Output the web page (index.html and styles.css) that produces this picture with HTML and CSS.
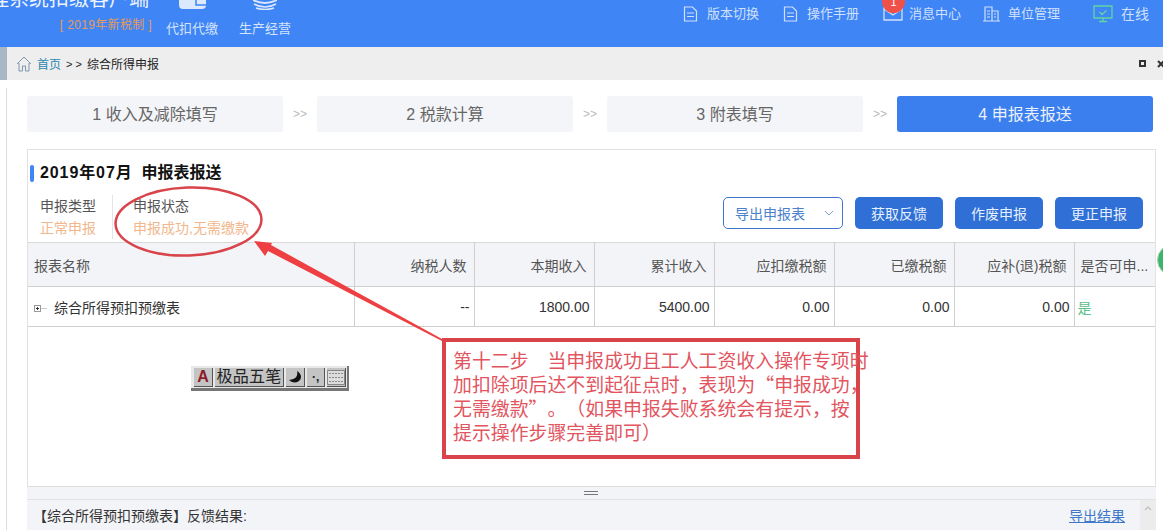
FILE: index.html
```html
<!DOCTYPE html>
<html lang="zh-CN">
<head>
    <meta charset="UTF-8">
    <meta name="viewport" content="width=device-width, initial-scale=1.0">
    <title>综合所得申报</title>
    <link rel="stylesheet" href="styles.css">
</head>
<body>
    <header class="header">
        <div class="brand">
            <div class="brand-title">自然人税收管理系统扣缴客户端</div>
            <div class="brand-sub">[ 2019年新税制 ]</div>
        </div>
        <nav class="main-nav">
            <div class="main-nav-item">
                <svg class="main-nav-icon" width="27" height="10" viewBox="0 0 27 10"><path d="M0 0h27v5q0 4-4 4H4q-4 0-4-4z" fill="#dce8fc"/><path d="M17 0v5h10" fill="none" stroke="#3f85f5" stroke-width="1.5"/></svg>
                <span>代扣代缴</span>
            </div>
            <div class="main-nav-item">
                <svg class="main-nav-icon" width="24" height="10" viewBox="0 0 24 10"><path d="M0 0q12 6 24 0" fill="none" stroke="#dce8fc" stroke-width="2"/><path d="M1 4q11 6 22 0M3 8q9 3 18 0" fill="none" stroke="#dce8fc" stroke-width="1.6"/></svg>
                <span>生产经营</span>
            </div>
        </nav>
        <nav class="top-nav">
            <a class="top-link link-version">
                <svg width="15" height="16" viewBox="0 0 15 16"><path d="M1.500 1h8l4 4v10h-12zM4 7h7M4 10.500h7" fill="none" stroke="#cfe0fb" stroke-width="1.200"/></svg>
                <span>版本切换</span>
            </a>
            <a class="top-link link-manual">
                <svg width="15" height="16" viewBox="0 0 15 16"><path d="M1.500 1h8l4 4v10h-12zM4 7h7M4 10.500h7" fill="none" stroke="#cfe0fb" stroke-width="1.200"/></svg>
                <span>操作手册</span>
            </a>
            <a class="top-link link-msg">
                <svg width="20" height="14" viewBox="0 0 20 14"><path d="M1 1h18v12H1zM1 2l9 6 9-6" fill="none" stroke="#cfe0fb" stroke-width="1.300"/></svg>
                <i class="badge">1</i>
                <span>消息中心</span>
            </a>
            <a class="top-link link-unit">
                <svg width="17" height="16" viewBox="0 0 17 16"><path d="M2 15V1h7v14M9 5h6v10M0 15h17M4 5h3M4 8h3M4 11h3M11 8h2M11 11h2" fill="none" stroke="#cfe0fb" stroke-width="1.200"/></svg>
                <span>单位管理</span>
            </a>
            <a class="top-link link-online">
                <svg width="20" height="18" viewBox="0 0 20 18"><path d="M1 1h18v12H1zM6 16.500h8M10 13v3M6.500 7l2.500 2.500 4.500-4" fill="none" stroke="#5fd6a0" stroke-width="1.300"/></svg>
                <span>在线</span>
            </a>
        </nav>
    </header>

    <div class="crumbs">
        <svg class="home-icon" width="16" height="16" viewBox="0 0 16 16"><path d="M1 8l7-7 7 7M3 7v8h3.500v-5h3v5H13V7" fill="none" stroke="#7d97ad" stroke-width="1"/></svg>
        <a class="crumb-home">首页</a>
        <span class="crumb-sep">&gt; &gt;</span>
        <span class="crumb-current">综合所得申报</span>
        <div class="crumb-tools">
            <span class="tool-max"></span>
            <svg width="8" height="8" viewBox="0 0 8 8"><path d="M1 1l6 6M7 1L1 7" stroke="#333" stroke-width="2"/></svg>
        </div>
    </div>

    <main class="main">
        <div class="page">
            <div class="steps">
                <div class="step">1 收入及减除填写</div>
                <div class="step-sep">&gt;&gt;</div>
                <div class="step">2 税款计算</div>
                <div class="step-sep">&gt;&gt;</div>
                <div class="step">3 附表填写</div>
                <div class="step-sep">&gt;&gt;</div>
                <div class="step step-active">4 申报表报送</div>
            </div>

            <section class="panel">
                <h2 class="panel-title"><span class="panel-date">2019年07月</span>&nbsp; 申报表报送</h2>
                <div class="info-row">
                    <div class="info-item info-type">
                        <div class="info-label">申报类型</div>
                        <div class="info-value">正常申报</div>
                    </div>
                    <div class="info-item info-status">
                        <div class="info-label">申报状态</div>
                        <div class="info-value">申报成功,无需缴款</div>
                    </div>
                    <div class="actions">
                        <button class="btn-export">导出申报表
                            <svg width="10" height="6" viewBox="0 0 10 6"><path d="M1 1l4 4 4-4" fill="none" stroke="#7f9fcc" stroke-width="1"/></svg>
                        </button>
                        <button class="btn">获取反馈</button>
                        <button class="btn">作废申报</button>
                        <button class="btn">更正申报</button>
                    </div>
                </div>

                <table class="report-table">
                    <thead>
                        <tr>
                            <th class="col-name">报表名称</th>
                            <th class="col-num">纳税人数</th>
                            <th class="col-num">本期收入</th>
                            <th class="col-num">累计收入</th>
                            <th class="col-num">应扣缴税额</th>
                            <th class="col-num">已缴税额</th>
                            <th class="col-num">应补(退)税额</th>
                            <th class="col-flag">是否可申...</th>
                        </tr>
                    </thead>
                    <tbody>
                        <tr>
                            <td class="col-name"><span class="tree-toggle"></span><span class="tree-line"></span>综合所得预扣预缴表</td>
                            <td class="col-num">--</td>
                            <td class="col-num">1800.00</td>
                            <td class="col-num">5400.00</td>
                            <td class="col-num">0.00</td>
                            <td class="col-num">0.00</td>
                            <td class="col-num">0.00</td>
                            <td class="col-flag flag-yes">是</td>
                        </tr>
                    </tbody>
                </table>
            </section>

            <div class="splitter"><span class="splitter-grip"></span></div>

            <div class="feedback">
                <span class="feedback-text">【综合所得预扣预缴表】反馈结果:</span>
                <a class="feedback-link">导出结果</a>
                <div class="scroll-bar">
                    <svg width="8" height="6" viewBox="0 0 8 6"><path d="M1 5l3-3 3 3" fill="none" stroke="#c4c4c4" stroke-width="1.500"/></svg>
                </div>
            </div>
        </div>
    </main>

    <!-- 悬浮在页面上的输入法状态条 -->
    <div class="ime-bar">
        <span class="ime-cell ime-a">A</span>
        <span class="ime-cell ime-name">极品五笔</span>
        <span class="ime-cell ime-moon">
            <svg width="14" height="14" viewBox="0 0 14 14"><path d="M9 1q2 8-8 9 6 5 11 0 3-5-3-9z" fill="#111"/></svg>
        </span>
        <span class="ime-cell ime-dots">·,</span>
        <span class="ime-cell ime-keys">
            <svg width="18" height="15" viewBox="0 0 18 15"><path d="M.5.500h17v14H.500z" fill="#ddd" stroke="#888"/><path d="M2 3.500h14M2 7.500h14M2 11.500h14" stroke="#888" stroke-dasharray="2 1"/></svg>
        </span>
    </div>

    <div class="side-ball"></div>

    <!-- 截图上的红色标注 -->
    <svg class="mark-layer" width="1163" height="530" viewBox="0 0 1163 530">
        <ellipse cx="188.500" cy="221.500" rx="73" ry="34" fill="none" stroke="#d9434a" stroke-width="2.500" transform="rotate(-2 188.500 221.500)"/>
        <path d="M254 241L272 243L271 245L442 339L442 341L268 251L265 256Z" fill="#ee3f42"/>
    </svg>
    <div class="callout">第十二步　当申报成功且工人工资收入操作专项时<br>加扣除项后达不到起征点时，表现为“申报成功，<br>无需缴款”。（如果申报失败系统会有提示，按<br>提示操作步骤完善即可）</div>
</body>
</html>
```

FILE: styles.css
```css
* {
    box-sizing: border-box;
}
html, body {
    margin: 0;
    height: 530px;
    overflow: hidden;
}
body {
    position: relative;
    display: flex;
    flex-direction: column;
    background-color: #fff;
    font-family: "Liberation Sans", "Noto Sans CJK SC", sans-serif;
    font-size: 14px;
    color: #333;
}

/* 顶部蓝条 */
.header {
    flex: none;
    height: 47px;
    display: flex;
    background-color: #3f85f5;
    color: #d5e4fc;
    overflow: hidden;
}
.brand {
    flex: none;
    width: 152px;
    display: flex;
    flex-direction: column;
    align-items: flex-end;
}
.brand-title {
    display: flex;
    justify-content: flex-end;
    width: 149px;
    margin-right: 3px;
    margin-top: -16px;
    height: 30px;
    line-height: 30px;
    font-size: 20px;
    color: #eef4fe;
    white-space: nowrap;
}
.brand-sub {
    margin-top: 2px;
    font-size: 12px;
    letter-spacing: .35px;
    line-height: 18px;
    color: #e69b5a;
    white-space: nowrap;
}
.main-nav {
    display: flex;
    gap: 21px;
    margin-left: 14px;
}
.main-nav-item {
    display: flex;
    flex-direction: column;
    align-items: center;
    font-size: 13px;
    line-height: 18px;
}
.main-nav-icon {
    display: block;
    margin-bottom: 10px;
}
.top-nav {
    display: flex;
    height: 28px;
    margin-left: auto;
    margin-right: 14px;
    align-items: center;
}
.top-link {
    position: relative;
    display: flex;
    align-items: center;
    font-size: 13px;
    line-height: 18px;
    color: #cfe0fb;
    white-space: nowrap;
}
.top-link svg {
    display: block;
}
.link-version span, .link-manual span {
    margin-left: 9px;
}
.link-manual {
    margin-left: 24px;
}
.link-msg {
    margin-left: 24px;
}
.link-msg span {
    margin-left: 6px;
}
.link-unit {
    margin-left: 22px;
}
.link-unit span {
    margin-left: 8px;
}
.link-online {
    margin-left: 33px;
}
.link-online span {
    margin-left: 8px;
    font-size: 14px;
}
.badge {
    position: absolute;
    left: -1px;
    top: -15px;
    width: 23px;
    height: 23px;
    border-radius: 50%;
    background-color: #f0504a;
    color: #fff;
    font-style: normal;
    font-size: 11px;
    line-height: 24px;
    text-align: center;
}

/* 面包屑 */
.crumbs {
    flex: none;
    height: 33px;
    display: flex;
    align-items: center;
    background-color: #eee;
    border-left: 7px solid #a9b6c4;
    padding-left: 9px;
    font-size: 12px;
}
.home-icon {
    flex: none;
    margin-right: 5px;
}
.crumb-home {
    color: #2a88ad;
}
.crumb-sep {
    margin: 0 5px;
    font-size: 11px;
    color: #222;
}
.crumb-current {
    color: #222;
}
.crumb-tools {
    display: flex;
    align-items: center;
    gap: 11px;
    margin-left: auto;
    margin-right: -2px;
}
.tool-max {
    width: 7px;
    height: 7px;
    border: 2px solid #333;
}

/* 主体 */
.main {
    flex: 1;
    min-height: 0;
    padding: 8px 7px 0 6px;
}
.page {
    height: 100%;
    display: flex;
    flex-direction: column;
    padding: 8px 0 0 20px;
    border-left: 1px solid #ddd;
}
.steps {
    flex: none;
    display: flex;
    height: 36px;
    margin-right: 3px;
}
.step {
    flex: 1;
    padding-top: 1px;
    line-height: 36px;
    text-align: center;
    font-size: 16px;
    color: #666;
    background-color: #f4f5f8;
    border-radius: 3px;
}
.step-active {
    background-color: #3b7fee;
    color: #eaf1fd;
}
.step-sep {
    flex: none;
    width: 34px;
    line-height: 36px;
    text-align: center;
    font-size: 12px;
    color: #bbb;
}

.panel {
    flex: 1;
    min-height: 0;
    margin-top: 17px;
    border: 1px solid #e2e2e2;
    border-bottom-color: #ddd;
}
.panel-title {
    position: relative;
    margin: 0;
    height: 45px;
    padding: 11px 0 0 12px;
    font-size: 16px;
    line-height: 24px;
    font-weight: bold;
    color: #111;
}
.panel-date {
    letter-spacing: .9px;
}
.panel-title::before {
    content: "";
    position: absolute;
    left: 2px;
    top: 15px;
    width: 4px;
    height: 17px;
    border-radius: 2px;
    background-color: #3f85f5;
}
.info-row {
    display: flex;
    height: 47px;
    padding-left: 12px;
}
.info-item {
    line-height: 22px;
    font-size: 14px;
}
.info-type {
    width: 73px;
    height: 44px;
    border-right: 1px solid #e5e5e5;
}
.info-status {
    padding-left: 20px;
}
.info-label {
    color: #555;
}
.info-value {
    color: #f0b78c;
}
.actions {
    display: flex;
    gap: 12px;
    margin-left: auto;
    margin-top: 2px;
    margin-right: 12px;
}
.btn-export, .btn {
    height: 32px;
    border-radius: 5px;
    font-family: inherit;
    font-size: 14px;
}
.btn-export {
    display: flex;
    align-items: center;
    justify-content: space-between;
    width: 120px;
    padding: 0 8px 0 11px;
    background-color: #fff;
    border: 1px solid #3f78c9;
    color: #4a80cc;
}
.btn {
    width: 88px;
    padding: 0;
    border: none;
    background-color: #2f6fd6;
    color: #e6effc;
}

.report-table {
    width: 1127px;
    border-collapse: collapse;
    table-layout: fixed;
    font-size: 14px;
}
.report-table th, .report-table td {
    padding: 0;
    font-weight: normal;
    white-space: nowrap;
    border-top: 1px solid #d9d9d9;
    border-bottom: 1px solid #d0d0d0;
    border-right: 1px solid #d0d0d0;
}
.report-table th {
    height: 44px;
    background-color: #f3f4f8;
    color: #555;
}
.report-table td {
    height: 40px;
    color: #333;
}
.report-table th:last-child, .report-table td:last-child {
    border-right: none;
}
.report-table .col-name {
    width: 326px;
    padding-left: 6px;
    text-align: left;
}
.report-table .col-num {
    width: 120px;
    text-align: right;
}
.report-table th.col-num {
    padding-right: 7px;
}
.report-table td.col-num {
    padding-right: 4px;
}
.report-table .col-flag {
    padding-left: 6px;
    text-align: left;
}
.report-table td.flag-yes {
    padding-left: 3px;
    color: #5cc08a;
}
.tree-toggle {
    position: relative;
    display: inline-block;
    width: 7px;
    height: 7px;
    border: 1px solid #999;
    vertical-align: 1px;
}
.tree-toggle::before {
    content: "";
    position: absolute;
    left: 1px;
    top: 2px;
    width: 3px;
    height: 1px;
    background-color: #333;
}
.tree-toggle::after {
    content: "";
    position: absolute;
    left: 2px;
    top: 1px;
    width: 1px;
    height: 3px;
    background-color: #333;
}
.tree-line {
    display: inline-block;
    width: 6px;
    height: 1px;
    margin: 0 7px 0 0;
    background-color: #ccc;
    vertical-align: 4px;
}

.splitter {
    flex: none;
    height: 13px;
    display: flex;
    align-items: center;
    justify-content: center;
    background-color: #f3f4f8;
    border-bottom: 1px solid #e2e2e2;
}
.splitter-grip {
    width: 14px;
    height: 4px;
    margin-right: 2px;
    border-top: 1px solid #777;
    border-bottom: 1px solid #777;
}
.feedback {
    flex: none;
    height: 30px;
    display: flex;
    align-items: center;
    padding-left: 6px;
    background-color: #f3f4f8;
}
.feedback-text {
    flex: 1;
    color: #333;
}
.feedback-link {
    color: #3f78c9;
    text-decoration: underline;
}
.scroll-bar {
    align-self: stretch;
    width: 16px;
    margin-left: 15px;
    padding: 5px 0 0 4px;
    background-color: #ececec;
}
.scroll-bar svg {
    display: block;
}

/* 输入法状态条 */
.ime-bar {
    position: absolute;
    left: 191px;
    top: 366px;
    width: 158px;
    height: 25px;
    display: flex;
    gap: 2px;
    padding: 2px 1px 1px 3px;
    background-color: #e8e8e8;
    border-right: 2px solid #777;
    border-bottom: 3px solid #777;
}
.ime-cell {
    display: flex;
    align-items: center;
    justify-content: center;
    height: 100%;
    background-color: #c4c4c4;
    border-right: 1px solid #555;
    border-bottom: 1px solid #555;
    color: #222;
}
.ime-a {
    width: 19px;
    font-weight: bold;
    font-size: 16px;
    color: #8e1b2a;
}
.ime-name {
    width: 70px;
    font-size: 16px;
    letter-spacing: .3px;
    line-height: 1;
    white-space: nowrap;
}
.ime-moon {
    width: 19px;
}
.ime-dots {
    width: 18px;
    font-size: 12px;
    font-weight: bold;
}
.ime-keys {
    flex: 1;
}

.side-ball {
    position: absolute;
    left: 1157px;
    top: 244px;
    width: 32px;
    height: 32px;
    border-radius: 50%;
    background-color: #3cb56b;
    border: 1px solid #b9c9bd;
}

/* 标注 */
.mark-layer {
    position: absolute;
    left: 0;
    top: 0;
    pointer-events: none;
}
.callout {
    position: absolute;
    left: 442px;
    top: 338px;
    width: 418px;
    height: 121px;
    padding: 6px 0 0 7px;
    border: 4px solid #d9434a;
    font-family: "Noto Sans CJK SC", sans-serif;
    font-size: 18.9px;
    line-height: 24px;
    color: #e2555f;
    white-space: nowrap;
    text-spacing-trim: space-all;
}
```
